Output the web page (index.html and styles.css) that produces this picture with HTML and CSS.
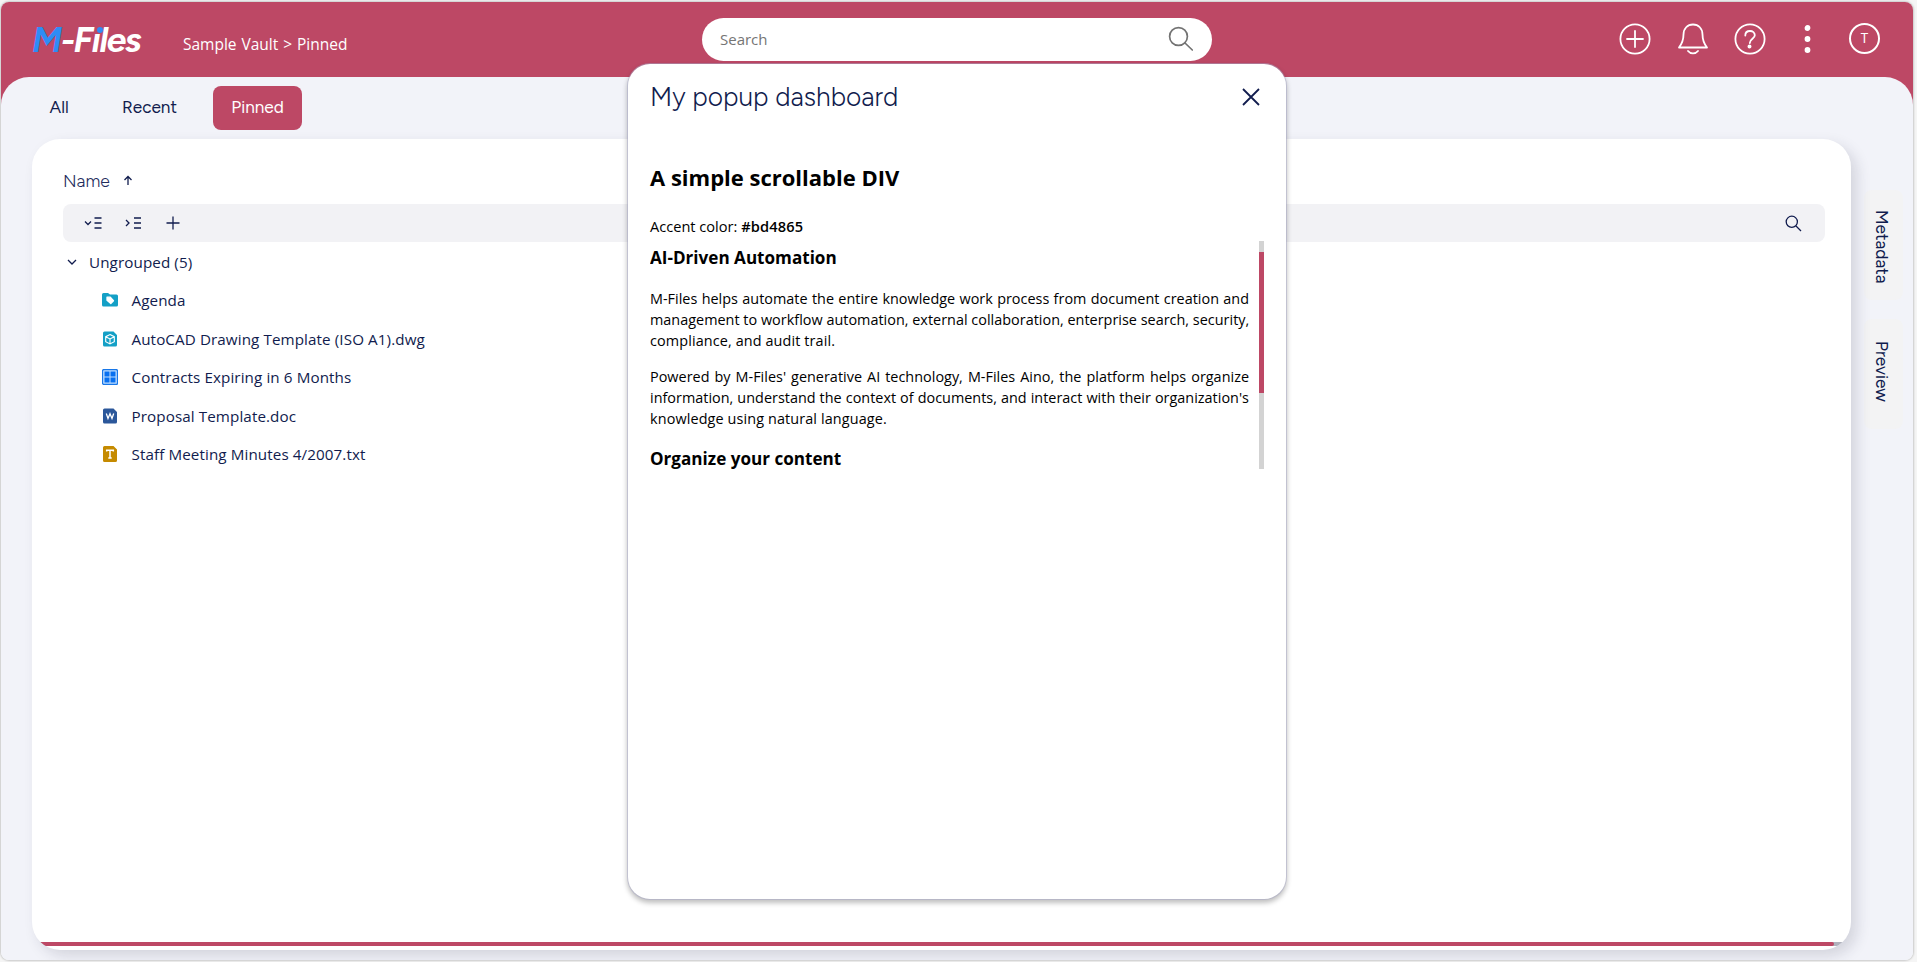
FILE: index.html
```html
<!DOCTYPE html>
<html lang="en">
<head>
<meta charset="utf-8">
<title>M-Files</title>
<link rel="stylesheet" href="styles.css">
</head>
<body>
<div class="window">
  <header class="header">
    <div class="logo"><span class="logo-m">M</span>-F<span class="logo-i">ı<i class="logo-dot"></i></span>les</div>
    <nav class="crumbs">Sample Vault &gt; Pinned</nav>
    <div class="search"><span>Search</span>
      <svg width="26" height="26" viewBox="0 0 26 26"><circle cx="10.5" cy="10.5" r="8.9"/><path d="M17 17l7.300 7"/></svg>
    </div>
    <div class="actions">
      <svg width="32" height="32" viewBox="0 0 32 32"><circle cx="16" cy="16" r="14.600"/><path d="M16 8v16M8 16h16"/></svg>
      <svg width="32" height="32" viewBox="0 0 32 32"><path d="M2 24.500C5.500 20 6.500 16.500 6.500 11.500C6.500 5.500 10.500 1.500 16 1.500S25.500 5.500 25.500 11.500C25.500 16.500 26.500 20 30 24.500Z" stroke-linejoin="round"/><path d="M11 28c2.500 3.200 7.500 3.200 10 0"/></svg>
      <svg width="32" height="32" viewBox="0 0 32 32"><circle cx="16" cy="16" r="14.600"/><path d="M11.300 12.500C11.300 9.700 13.300 8 16 8S20.800 9.800 20.800 12.300C20.800 15.800 15.800 15.800 15.800 20"/><circle cx="15.500" cy="23.500" r="1.100" class="solid"/></svg>
      <svg width="32" height="32" viewBox="0 0 32 32"><g class="solid"><circle cx="15.500" cy="5" r="2"/><circle cx="15.500" cy="16" r="2"/><circle cx="15.500" cy="27" r="2"/></g></svg>
      <div class="avatar">T</div>
    </div>
  </header>
  <main class="content">
    <div class="left">
      <div class="tabs"><span class="tab tab-all">All</span><span class="tab tab-recent">Recent</span><span class="tab tab-pinned">Pinned</span></div>
      <section class="pane">
        <div class="colhead"><span>Name</span><svg width="10" height="11" viewBox="0 0 10 11"><path d="M5 10V1.500M1.500 5L5 1.500L8.500 5"/></svg></div>
        <div class="toolbar">
          <svg class="t1" width="18" height="12" viewBox="0 0 18 12"><path d="M1 4.500l3 3l3-3M10.500 1h7M10.500 6h7M10.500 11h7"/></svg>
          <svg class="t2" width="18" height="12" viewBox="0 0 18 12"><path d="M2 3l3 3l-3 3M10 1h7M10 6h7M10 11h7"/></svg>
          <svg class="t3" width="14" height="14" viewBox="0 0 14 14"><path d="M7 .5v13M.5 7h13"/></svg>
          <svg class="t4" width="17" height="17" viewBox="0 0 17 17"><circle cx="6.800" cy="6.800" r="5.600"/><path d="M11 11l5 5"/></svg>
        </div>
        <div class="group"><svg width="10" height="7" viewBox="0 0 10 7"><path d="M1 1l4 4l4-4"/></svg><span>Ungrouped (5)</span></div>
        <ul class="items">
          <li><svg width="16" height="16" viewBox="0 0 16 16"><path d="M1.500 1H6l2 1.500h6.500a1.500 1.500 0 0 1 1.500 1.500v9a1.500 1.500 0 0 1-1.500 1.500h-13a1.500 1.500 0 0 1-1.500-1.500V2.500a1.500 1.500 0 0 1 1.500-1.500Z" fill="#14a0c6"/><path d="M5 5.200H8.300l3.200 3.600-2.700 2.700-3.800-3.300Z" fill="#fff" stroke="#fff" stroke-linejoin="round"/></svg><span>Agenda</span></li>
          <li><svg width="16" height="16" viewBox="0 0 16 16"><path d="M2.500 .5h9l3.500 3.500v10a1.500 1.500 0 0 1-1.500 1.500h-11A1.500 1.500 0 0 1 1 14V2A1.500 1.500 0 0 1 2.500 .5Z" fill="#14a0c6"/><path d="M8 3.500l4.300 2.200v5L8 12.900l-4.300-2.200v-5ZM3.700 5.700L8 7.900l4.300-2.200M8 7.900v5" fill="none" stroke="#fff" stroke-width="1.100"/></svg><span>AutoCAD Drawing Template (ISO A1).dwg</span></li>
          <li><svg width="16" height="16" viewBox="0 0 16 16"><rect x=".5" y=".5" width="15" height="15" rx="1.500" fill="#bcdcff" stroke="#1877e8"/><path d="M2.500 2.500h5v5h-5zM8.500 2.500h5v5h-5zM2.500 8.500h5v5h-5zM8.500 8.500h5v5h-5z" fill="#0870f0"/></svg><span>Contracts Expiring in 6 Months</span></li>
          <li><svg width="16" height="16" viewBox="0 0 16 16"><path d="M2.500 .5h9l3.500 3.500v10a1.500 1.500 0 0 1-1.500 1.500h-11A1.500 1.500 0 0 1 1 14V2A1.500 1.500 0 0 1 2.500 .5Z" fill="#2b579a"/><path d="M4.300 5.500l1.700 5 2-4.800 2 4.800 1.700-5" fill="none" stroke="#fff" stroke-width="1.300"/></svg><span>Proposal Template.doc</span></li>
          <li><svg width="16" height="16" viewBox="0 0 16 16"><path d="M2.500 0h9l3.500 3.500V14.500a1.500 1.500 0 0 1-1.500 1.500h-11A1.500 1.500 0 0 1 1 14.500V1.500A1.500 1.500 0 0 1 2.500 0Z" fill="#c58a00"/><path d="M4.700 5.500V4.300h6.600v1.200M8 4.300V12.300M6.300 12h3.400" fill="none" stroke="#fff" stroke-width="1.500"/></svg><span>Staff Meeting Minutes 4/2007.txt</span></li>
        </ul>
        <div class="hbar"><div class="hthumb"></div></div>
      </section>
    </div>
    <aside class="side"><div class="vtab"><span>Metadata</span></div><div class="vtab vtab-preview"><span>Preview</span></div></aside>
  </main>
  <div class="popup">
    <div class="popup-head"><span>My popup dashboard</span><svg width="18" height="18" viewBox="0 0 18 18"><path d="M1 1l16 16M17 1L1 17"/></svg></div>
    <h1>A simple scrollable DIV</h1>
    <div class="accent">Accent color: <b>#bd4865</b></div>
    <div class="scroller">
      <div class="article">
        <h2>AI-Driven Automation</h2>
        <p><span>M-Files helps automate the entire knowledge work process from document creation and</span><span>management to workflow automation, external collaboration, enterprise search, security,</span><span class="end">compliance, and audit trail.</span></p>
        <p><span>Powered by M-Files' generative AI technology, M-Files Aino, the platform helps organize</span><span>information, understand the context of documents, and interact with their organization's</span><span class="end">knowledge using natural language.</span></p>
        <h2>Organize your content</h2>
      </div>
      <div class="vbar"><div class="vthumb"></div></div>
    </div>
  </div>
</div>
</body>
</html>
```
FILE: styles.css
```css
* { box-sizing: border-box; }
body { margin: 0; padding: 2px 4px 2px 1px; height: 962px; overflow: hidden; background: #f5f5f5; font-family: "Open Sans", "Noto Sans", sans-serif; color: #111c4e; }
.window { position: relative; height: 958px; border-radius: 8px; overflow: hidden; background: linear-gradient(#bd4865 0 120px, #f2f3f9 120px); box-shadow: 0 0 2px 1px rgba(0,0,0,.18); }
svg { display: block; flex: none; fill: none; stroke: #111c4e; stroke-width: 1.3; }
.items svg { stroke: none; }
.header { height: 75px; display: flex; align-items: flex-start; padding-left: 31px; color: #fff; }
.logo { width: 151px; padding-top: 18px; font: italic 700 35px/40px Figtree, Lato, sans-serif; letter-spacing: -1.350px; white-space: nowrap; }
.logo-m { color: #2f8cf5; }
.logo-i { position: relative; }
.logo-dot { position: absolute; left: 5px; top: 8px; width: 6px; height: 6px; border-radius: 50%; background: #2f8cf5; }
.crumbs { width: 519px; padding-top: 30px; font-size: 15.500px; line-height: 24px; word-spacing: .9px; }
.search { width: 510px; height: 43px; margin-top: 16px; padding: 0 18px; border-radius: 22px; background: #fff; color: #757575; display: flex; align-items: center; justify-content: space-between; font-size: 15px; }
.search span { margin-top: -2px; }
.search svg { stroke: #737373; stroke-width: 1.7; stroke-linecap: round; margin-top: -1px; }
.actions { display: flex; gap: 25.500px; margin: 20.500px 0 0 407px; align-items: center; }
.actions svg { stroke: #fff; stroke-width: 1.8; stroke-linecap: round; }
.actions .solid { fill: #fff; }
.avatar { width: 31px; height: 31px; border: 2px solid #fff; border-radius: 50%; font: 13px/27px Inter, sans-serif; text-align: center; }
.content { height: 883px; border-radius: 28px 28px 8px 8px; background: #f2f3f9; display: flex; }
.left { width: 1850px; padding-left: 31px; }
.tabs { height: 62px; padding: 9px 0 0 17.500px; display: flex; font: 400 17.200px/43px Figtree, Lato, sans-serif; }
.tab-all { width: 72.500px; }
.tab-recent { width: 91px; }
.tab-pinned { width: 89px; height: 44px; border-radius: 8px; background: #bd4865; color: #fff; text-align: center; }
.pane { position: relative; z-index: 1; height: 811px; padding: 0 26px 0 31px; border-radius: 28px; background: #fff; box-shadow: 6px 6px 14px rgba(40,40,70,.15); display: flex; flex-direction: column; overflow: hidden; }
.colhead { height: 65px; padding-top: 30px; display: flex; gap: 13px; font: 350 17.600px/24px Figtree, Lato, sans-serif; flex: none; color: #232c5c; }
.colhead svg { margin-top: 6px; }
.toolbar { height: 38px; flex: none; border-radius: 8px; background: #f2f2f5; display: flex; align-items: center; padding: 0 23px 0 21px; }
.t2 { margin-left: 22px; }
.t3 { margin-left: 24px; }
.t4 { margin-left: auto; }
.group { height: 40px; flex: none; display: flex; align-items: center; gap: 12px; padding-left: 4px; font-size: 15.200px; letter-spacing: .1px; }
.items { list-style: none; margin: -1px 0 0; padding: 0 0 0 39px; font-size: 15.200px; letter-spacing: .1px; }
.items li { height: 38.500px; display: flex; align-items: center; gap: 13.500px; white-space: nowrap; }
.group span, .items span { font-weight: 370; }
.hbar { margin: auto -26px 4px -31px; height: 4px; background: #b0b2bd; }
.hthumb { width: 1802px; height: 4px; border-radius: 0 2px 2px 0; background: #bd4865; }
.side { padding: 113px 0 0 13px; }
.vtab { width: 39px; height: 110px; border-radius: 8px; background: #f3f3f4; writing-mode: vertical-rl; font: 400 17.300px/42px Figtree, Lato, sans-serif; padding-top: 19.500px; }
.vtab-preview { margin-top: 19px; padding-top: 22px; }
.popup { position: absolute; z-index: 2; left: 627px; top: 62px; width: 658px; height: 835px; border-radius: 22px; padding: 0 22px; background: #fff; box-shadow: 0 0 0 1px rgba(170,170,200,.5), 0 3px 5px 1px rgba(0,0,0,.25); color: #000; }
.popup-head { height: 64px; display: flex; justify-content: space-between; align-items: center; padding: 2px 4px 0 0; font: 340 26.400px/32px Figtree, Lato, sans-serif; color: #111c4e; }
.popup-head svg { stroke-width: 1.8; }
h1 { margin: 33px 0 0; font-size: 22px; line-height: 32px; font-weight: 700; }
.accent { margin-top: 21px; font-size: 14.600px; line-height: 24px; }
.accent b { font-weight: 600; letter-spacing: .15px; }
.scroller { display: flex; height: 228px; margin-top: 3px; overflow: hidden; width: 614px; }
.article { width: 599px; margin-right: 10px; }
h2 { margin: 5px 0 0; font-size: 17.100px; line-height: 24px; font-weight: 700; }
p { margin: 18px 0 0; font-size: 14.400px; line-height: 21px; }
p + p { margin-top: 15px; }
p + h2 { margin-top: 18px; }
p span { display: block; white-space: nowrap; text-align-last: justify; letter-spacing: .02px; }
p .end { text-align-last: left; letter-spacing: .12px; }
.vbar { width: 5px; background: #d3d3d3; padding-top: 11px; }
.vthumb { height: 141px; background: #bd4865; }
```
